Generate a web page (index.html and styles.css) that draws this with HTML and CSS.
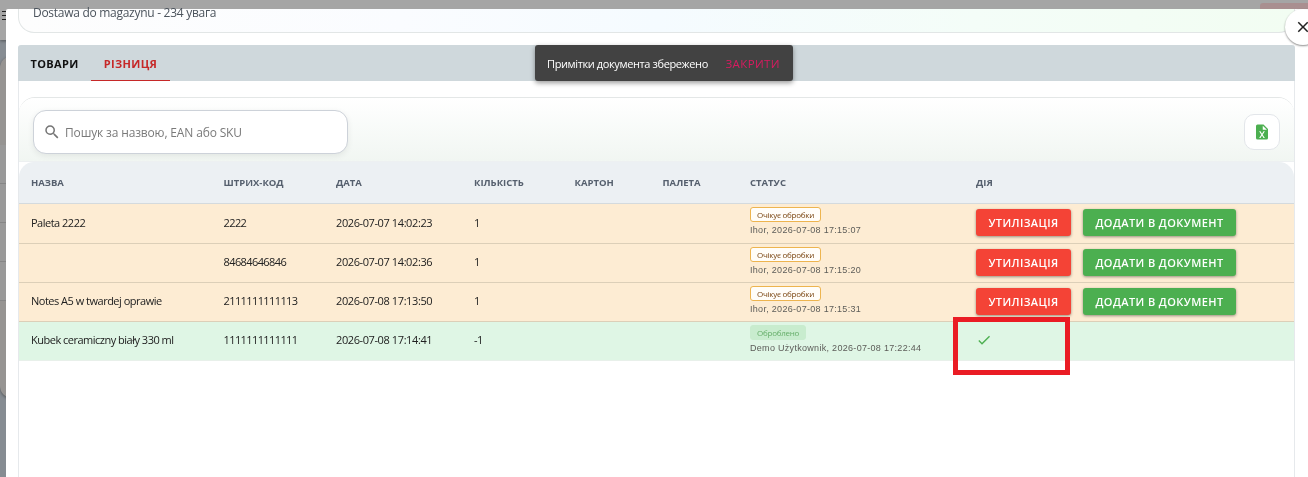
FILE: index.html
```
<!DOCTYPE html>
<html lang="uk">
<head>
    <meta charset="UTF-8">
    <meta name="viewport" content="width=device-width, initial-scale=1.0">
    <title>Dostawa do magazynu</title>
    <link rel="stylesheet" href="styles.css">
</head>
<body>
    <!-- page behind the dialog -->
    <div class="page">
        <div class="topbar">
            <div class="burger"><i></i><i></i><i></i></div>
            <div class="topbar-button"></div>
        </div>
        <div class="page-card">
            <div class="page-row"></div>
            <div class="page-row"></div>
            <div class="page-row"></div>
            <div class="page-row"></div>
        </div>
    </div>

    <div class="dialog">
        <div class="doc-header">Dostawa do magazynu - 234 увага</div>

        <div class="panel">
            <div class="tabs">
                <div class="tab">ТОВАРИ</div>
                <div class="tab active">РІЗНИЦЯ</div>
            </div>

            <div class="table-card">
                <div class="toolbar">
                    <label class="search">
                        <svg width="18" height="18" viewBox="0 0 24 24"><path fill="#757575" d="M9.5 3A6.5 6.5 0 0 1 16 9.5c0 1.61-.59 3.09-1.56 4.23l.27.27h.79l5 5-1.5 1.5-5-5v-.79l-.27-.27A6.52 6.52 0 0 1 9.5 16a6.5 6.5 0 0 1 0-13m0 2C7 5 5 7 5 9.5S7 14 9.5 14 14 12 14 9.5 12 5 9.5 5z"/></svg>
                        <span>Пошук за назвою, EAN або SKU</span>
                    </label>
                    <div class="excel">
                        <svg width="18" height="18" viewBox="0 0 24 24"><path fill="#4caf50" d="M14 2H6a2 2 0 0 0-2 2v16a2 2 0 0 0 2 2h12a2 2 0 0 0 2-2V8l-6-6m1.8 18H14l-2-3.4-2 3.4H8.2l2.9-4.5L8.2 11H10l2 3.4 2-3.4h1.8l-2.9 4.5 2.9 4.5M13 9V3.5L18.5 9H13z"/></svg>
                    </div>
                </div>

                <div class="table">
                    <div class="row head">
                        <div>НАЗВА</div>
                        <div>ШТРИХ-КОД</div>
                        <div>ДАТА</div>
                        <div>КІЛЬКІСТЬ</div>
                        <div>КАРТОН</div>
                        <div>ПАЛЕТА</div>
                        <div>СТАТУС</div>
                        <div>ДІЯ</div>
                    </div>
                    <div class="row pending first">
                        <div class="name">Paleta 2222</div>
                        <div class="code">2222</div>
                        <div class="date">2026-07-07 14:02:23</div>
                        <div>1</div>
                        <div></div>
                        <div></div>
                        <div class="status"><span class="chip">Очікує обробки</span><small>Ihor, 2026-07-08 17:15:07</small></div>
                        <div class="actions"><button class="btn red">УТИЛІЗАЦІЯ</button><button class="btn green">ДОДАТИ В ДОКУМЕНТ</button></div>
                    </div>
                    <div class="row pending">
                        <div class="name"></div>
                        <div class="code">84684646846</div>
                        <div class="date">2026-07-07 14:02:36</div>
                        <div>1</div>
                        <div></div>
                        <div></div>
                        <div class="status"><span class="chip">Очікує обробки</span><small>Ihor, 2026-07-08 17:15:20</small></div>
                        <div class="actions"><button class="btn red">УТИЛІЗАЦІЯ</button><button class="btn green">ДОДАТИ В ДОКУМЕНТ</button></div>
                    </div>
                    <div class="row pending">
                        <div class="name">Notes A5 w twardej oprawie</div>
                        <div class="code">2111111111113</div>
                        <div class="date">2026-07-08 17:13:50</div>
                        <div>1</div>
                        <div></div>
                        <div></div>
                        <div class="status"><span class="chip">Очікує обробки</span><small>Ihor, 2026-07-08 17:15:31</small></div>
                        <div class="actions"><button class="btn red">УТИЛІЗАЦІЯ</button><button class="btn green">ДОДАТИ В ДОКУМЕНТ</button></div>
                    </div>
                    <div class="row done">
                        <div class="name">Kubek ceramiczny biały 330 ml</div>
                        <div class="code">1111111111111</div>
                        <div class="date">2026-07-08 17:14:41</div>
                        <div>-1</div>
                        <div></div>
                        <div></div>
                        <div class="status"><span class="chip chip-done">Оброблено</span><small>Demo Użytkownik, 2026-07-08 17:22:44</small></div>
                        <div class="actions">
                            <svg width="16" height="16" viewBox="0 0 24 24"><path fill="#4caf50" d="M21 7 9 19l-5.5-5.5 1.41-1.41L9 16.17 19.59 5.59 21 7z"/></svg>
                            <span class="highlight"></span>
                        </div>
                    </div>
                </div>
            </div>
        </div>

        <button class="close">
            <svg width="18" height="18" viewBox="0 0 24 24"><path fill="#222" d="M19 6.41 17.59 5 12 10.59 6.41 5 5 6.41 10.59 12 5 17.59 6.41 19 12 13.41 17.59 19 19 17.59 13.41 12 19 6.41z"/></svg>
        </button>
    </div>

    <div class="snackbar">
        <span class="snack-text">Примітки документа збережено</span>
        <span class="snack-close">ЗАКРИТИ</span>
    </div>
</body>
</html>
```

FILE: styles.css
```
* {
    box-sizing: border-box;
}

body {
    margin: 0;
    height: 477px;
    overflow: hidden;
    font-family: "Open Sans", "Noto Sans", sans-serif;
    font-size: 11px;
    color: #212121;
    background-color: #868c92;
}

/* page behind */
.topbar {
    display: flex;
    justify-content: space-between;
    height: 40px;
    padding-top: 3px;
    background-color: #a5a5a5;
    box-shadow: 0 1px 3px rgba(0,0,0,0.4);
}

.burger {
    padding-top: 8px;
}

.burger i {
    display: block;
    width: 10px;
    height: 1px;
    margin-bottom: 3px;
    margin-left: 2px;
    background-color: #222;
}

.topbar-button {
    width: 48px;
    height: 20px;
    background-color: #a98f90;
    border-radius: 3px 0 0 3px;
}

.page-card {
    height: 342px;
    margin-top: 16px;
    padding-top: 89px;
    background-color: #969492;
    border-radius: 12px;
    box-shadow: 0 1px 3px rgba(0,0,0,0.4);
}

.page-row {
    height: 39px;
    background-color: #999;
    border-bottom: 1px solid #868686;
}

/* dialog */
.dialog {
    position: fixed;
    top: 9px;
    left: 6px;
    right: 0;
    bottom: 0;
    padding: 0 13px 0 12px;
    background-color: #fff;
    border-top-left-radius: 2px;
}

.doc-header {
    height: 24px;
    padding-left: 14px;
    border: 1px solid #e2e6e6;
    border-top: none;
    border-radius: 0 0 16px 16px;
    background: linear-gradient(90deg, #fdfdfd 0%, #fafcff 30%, #f5fbff 50%, #f4fdf8 75%, #f2fdf2 100%);
    font-size: 12px;
    line-height: 8px;
    letter-spacing: -0.28px;
    color: #4b535c;
}

.panel {
    height: 440px;
    margin-top: 12px;
    border: 1px solid #e6e9ec;
    border-top: none;
    border-radius: 4px 4px 0 0;
}

.tabs {
    display: flex;
    height: 36px;
    margin: 0 -1px;
    background-color: #cfd8dc;
    border-radius: 3px 3px 0 0;
}

.tab {
    display: flex;
    align-items: center;
    justify-content: center;
    width: 73px;
    font-weight: bold;
    letter-spacing: 0.35px;
    color: #111;
}

.tab.active {
    width: 79px;
    padding-top: 1px;
    color: #c62828;
    border-bottom: 1px solid #c62828;
}

.table-card {
    margin-top: 16px;
    border-top: 1px solid #e4e7e7;
    border-radius: 16px 16px 0 0;
}

.toolbar {
    display: flex;
    justify-content: space-between;
    align-items: center;
    height: 64px;
    padding: 5px 14px 0;
    border-bottom: 1px solid #edf0f1;
    border-radius: 16px 16px 0 0;
    background: linear-gradient(#fff, #f1f6f2);
}

.search {
    display: flex;
    align-items: center;
    width: 315px;
    height: 44px;
    padding-left: 9px;
    background-color: #fff;
    border: 1px solid #cdd2d9;
    border-radius: 13px;
    box-shadow: 0 2px 6px rgba(0,0,0,0.07);
    font-size: 12px;
    letter-spacing: -0.15px;
    color: #7a7a7a;
}

.search span {
    margin-left: 4px;
}

.excel {
    display: flex;
    align-items: center;
    justify-content: center;
    width: 36px;
    height: 36px;
    background-color: #fff;
    border: 1px solid #e3e6ea;
    border-radius: 10px;
}

.row {
    display: grid;
    grid-template-columns: 192.5px 112.5px 138px 100.5px 88px 87.5px 226px 1fr;
    align-items: center;
    height: 39px;
    padding-left: 12px;
    padding-bottom: 2px;
    border-bottom: 1px solid #dccfb8;
    background-color: #fdecd3;
    letter-spacing: -0.5px;
    white-space: nowrap;
}

.row > div {
    padding-bottom: 1px;
}

.row.first {
    height: 40px;
}

.row.head {
    height: 42px;
    padding-bottom: 0;
    background-color: #ecf0f3;
    border-bottom-color: #d4dadd;
    border-radius: 15px 15px 0 0;
    font-size: 9.5px;
    font-weight: bold;
    letter-spacing: 0;
    color: #56606e;
}

.row.done {
    background-color: #dff6e5;
    border-bottom-color: #e8f0ea;
}

.code {
    letter-spacing: -0.6px;
}

.date {
    letter-spacing: -0.4px;
}

.row > .status {
    display: flex;
    flex-direction: column;
    align-items: flex-start;
    padding-bottom: 2px;
}

.chip {
    height: 15px;
    padding: 0 6px;
    background-color: #fffdf9;
    border: 1px solid #edb44f;
    border-radius: 3px;
    font-size: 8px;
    line-height: 13px;
    letter-spacing: -0.25px;
    color: #7a4510;
}

.chip-done {
    background-color: #c8ecce;
    border-color: #c8ecce;
    color: #66ae6a;
}

.status small {
    margin-top: 2px;
    font-family: "Liberation Sans", Arial, sans-serif;
    font-size: 9px;
    line-height: 12px;
    letter-spacing: 0.3px;
    color: #5c5c58;
}

.row > .actions {
    position: relative;
    display: flex;
    gap: 12px;
    padding-bottom: 0;
}

.btn {
    height: 27px;
    padding: 0;
    border: none;
    border-radius: 3px;
    box-shadow: 0 1px 3px rgba(0,0,0,0.4);
    font-family: inherit;
    font-size: 11px;
    font-weight: 600;
    letter-spacing: 0.4px;
    color: #fff;
}

.red {
    width: 95px;
    background-color: #f44336;
}

.green {
    width: 153px;
    background-color: #4caf50;
}

.highlight {
    position: absolute;
    top: -15px;
    left: -23px;
    width: 117px;
    height: 58px;
    border: 5px solid #ea1c24;
}

.close {
    position: absolute;
    top: 0;
    right: -13px;
    display: flex;
    align-items: center;
    justify-content: center;
    width: 36px;
    height: 36px;
    padding: 0;
    background-color: #fff;
    border: none;
    border-radius: 50%;
    box-shadow: 0 1px 2px rgba(0,0,0,0.45);
}

.snackbar {
    position: fixed;
    top: 45px;
    left: 535px;
    display: flex;
    align-items: center;
    justify-content: space-between;
    width: 258px;
    height: 36px;
    padding: 0 13px 0 12px;
    background-color: #424242;
    border-radius: 3px;
    box-shadow: 0 2px 5px rgba(0,0,0,0.4);
    color: #fff;
    white-space: nowrap;
}

.snack-text {
    letter-spacing: -0.38px;
}

.snack-close {
    font-size: 11.5px;
    letter-spacing: 0.4px;
    color: #d81b60;
}
```
